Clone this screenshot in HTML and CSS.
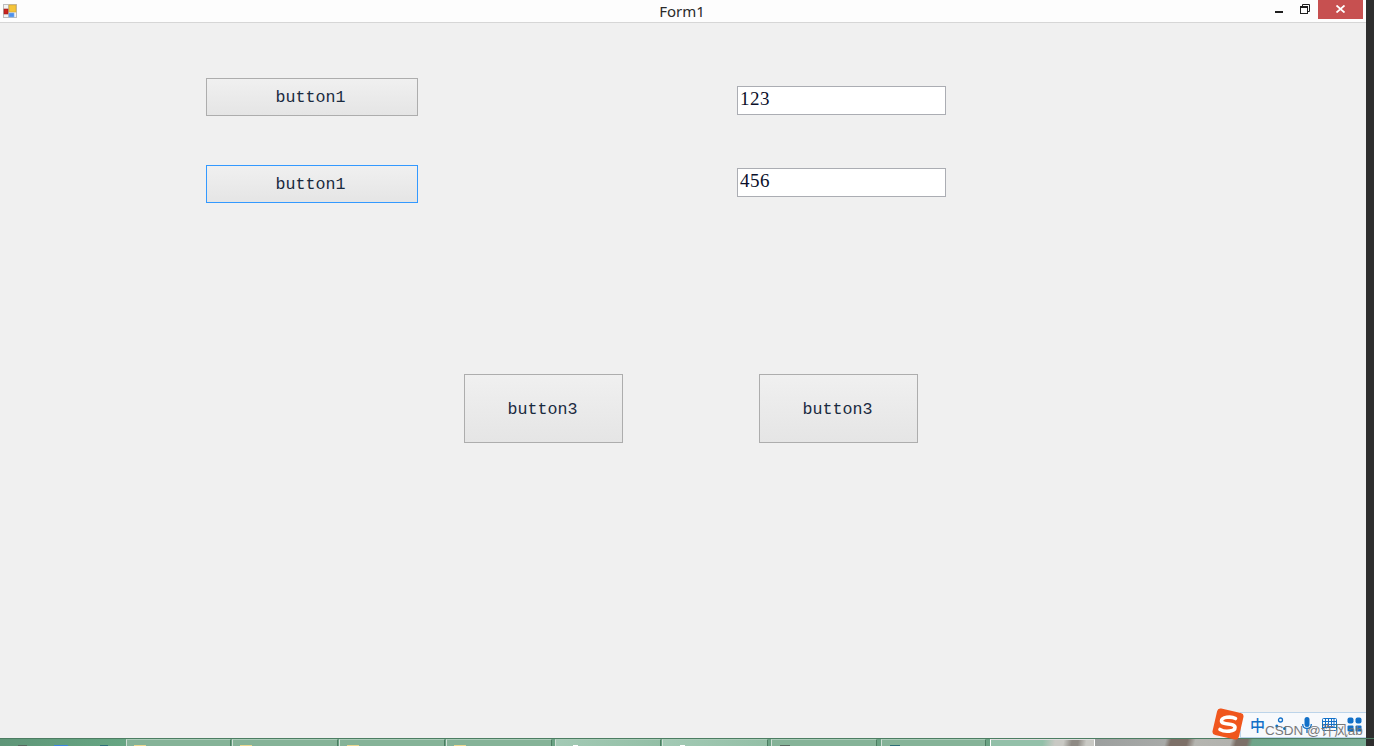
FILE: index.html
```html
<!DOCTYPE html>
<html lang="zh">
<head>
<meta charset="utf-8">
<title>Form1</title>
<link rel="stylesheet" href="styles.css">
</head>
<body>
<div class="screen">
  <div class="main">
    <div class="window">
      <header class="titlebar">
        <svg class="app-icon" width="14" height="14" viewBox="0 0 14 14">
          <rect width="14" height="14" fill="#f2f2f2"/>
          <path d="M0.5 0V14M5.5 0V14M13.5 0V14M0 0.5H14M0 13.5H14" stroke="#bdbdbd" fill="none"/>
          <rect x="6" y="1" width="7" height="7" fill="#f5c53a" stroke="#d8a838" stroke-width="0.7"/>
          <rect x="1" y="5" width="4" height="5" fill="#cc221c" stroke="#96201a" stroke-width="0.6"/>
          <rect x="6" y="9" width="5" height="4" fill="#4f90ea" stroke="#7aaef0" stroke-width="0.6"/>
        </svg>
        <span class="title">Form1</span>
        <div class="controls">
          <span class="ctl"><svg width="9" height="9" viewBox="0 0 9 9"><rect x="0" y="7" width="8" height="2" fill="#1e1e1e"/></svg></span>
          <span class="ctl"><svg width="10" height="10" viewBox="0 0 10 10" fill="none" stroke="#1e1e1e"><path d="M2.5 2V0.5H9.5V7.5H8"/><rect x="0.5" y="2.5" width="7" height="7"/><path d="M1 3.5H7"/></svg></span>
          <span class="ctl close"><svg width="9" height="8" viewBox="0 0 9 8" fill="none" stroke="#fff" stroke-width="1.8"><path d="M0.5 0.5L8.5 7.5M8.5 0.5L0.5 7.5"/></svg></span>
        </div>
      </header>
      <main class="form">
        <div class="top-row">
          <div class="button-col">
            <button class="win-btn wide">button1</button>
            <button class="win-btn wide focused">button1</button>
          </div>
          <div class="input-col">
            <div class="win-input first">123</div>
            <div class="win-input">456</div>
          </div>
        </div>
        <div class="bottom-row">
          <button class="win-btn big">button3</button>
          <button class="win-btn big">button3</button>
        </div>
      </main>
    </div>
    <div class="edge"></div>
  </div>
  <footer class="taskbar">
    <div class="start">
      <i class="tray gray"></i><i class="tray blue"></i><i class="tray teal"></i>
    </div>
    <div class="task w105"><i class="folder"></i></div>
    <div class="task w106"><i class="folder"></i></div>
    <div class="task w106"><i class="folder"></i></div>
    <div class="task w106"><i class="folder"></i></div>
    <div class="task w106 light gap3"><i class="doc"></i></div>
    <div class="task w106 light"><i class="doc"></i></div>
    <div class="task w106 gap3"><i class="mark"></i></div>
    <div class="task w105 gap4"><i class="mark teal-mark"></i></div>
    <div class="task w105 active gap4"></div>
    <div class="wallpaper"></div>
    <div class="edge"></div>
  </footer>
  <div class="ime">
    <svg class="ime-logo" width="32" height="32" viewBox="0 0 32 32">
      <rect x="2.5" y="2.5" width="27" height="27" rx="3.5" fill="#f0561d" transform="rotate(13 16 16)"/>
      <path d="M23.5 10.5C19 8 9.5 9 9.5 13C9.5 17.5 23 14.5 23 19.5C23 23.5 13 24.5 8 21.5" fill="none" stroke="#fff" stroke-width="3.6" stroke-linecap="round"/>
    </svg>
    <div class="ime-bar">
      <span class="ime-zh">中</span>
      <svg class="ime-dots" width="12" height="15" viewBox="0 0 12 15" fill="#1270c8"><circle cx="5.5" cy="3" r="2" fill="none" stroke="#1270c8" stroke-width="1.3"/><circle cx="1.8" cy="9" r="1.5"/><circle cx="9.5" cy="11.5" r="1.5"/></svg>
      <svg class="ime-mic" width="10" height="16" viewBox="0 0 10 16"><rect x="2.5" y="0" width="5" height="10" rx="2.5" fill="#1270c8"/><path d="M0.7 7C0.7 13 9.3 13 9.3 7M5 12V16" fill="none" stroke="#1270c8" stroke-width="1.3"/></svg>
      <svg width="15" height="13" viewBox="0 0 15 13" fill="none" stroke="#1270c8"><rect x="0.5" y="0.5" width="14" height="12" rx="1"/><path d="M0.5 3.5H14.5M0.5 6.5H14.5M0.5 9.5H14.5M3.5 0.5V9.5M6.5 0.5V9.5M9.5 0.5V9.5M12 0.5V9.5"/></svg>
      <svg width="15" height="15" viewBox="0 0 15 15" fill="#1270c8"><rect x="0.5" y="0.5" width="6" height="6" rx="2"/><rect x="8.5" y="0.5" width="6" height="6" rx="2"/><rect x="0.5" y="8.5" width="6" height="6" rx="1"/><rect x="8.5" y="8.5" width="6" height="6" rx="1"/></svg>
    </div>
    <span class="watermark">CSDN @许风ab</span>
  </div>
</div>
</body>
</html>
```
FILE: styles.css
```css
* { box-sizing: border-box; }
html, body { margin: 0; padding: 0; }
body { overflow: hidden; background: #f0f0f0; }

.screen {
  position: relative;
  width: 1374px;
  height: 746px;
  display: flex;
  flex-direction: column;
  overflow: hidden;
}

.main { flex: 1; display: flex; min-height: 0; }
.window { flex: 1; display: flex; flex-direction: column; min-width: 0; }
.edge { width: 8px; flex: none; background: #2e2e2e; }

.titlebar {
  position: relative;
  height: 23px;
  flex: none;
  display: flex;
  align-items: flex-start;
  background: #fdfdfd;
  border-bottom: 1px solid #d6d6d6;
}
.app-icon { margin: 4px 0 0 3px; }
.title {
  position: absolute;
  left: 0;
  right: 0;
  top: 1px;
  padding-right: 2px;
  text-align: center;
  font: 15px/20px "Noto Sans", sans-serif;
  color: #2a2a2a;
}
.controls { position: absolute; right: 3px; top: 0; display: flex; }
.ctl {
  width: 26px;
  height: 19px;
  display: flex;
  align-items: flex-start;
  justify-content: center;
  padding-top: 4px;
}
.ctl.close { width: 45px; background: #c75050; padding-top: 5px; }

.form { flex: 1; background: #f0f0f0; padding-top: 55px; }
.top-row { display: flex; padding-left: 206px; }
.button-col { width: 212px; display: flex; flex-direction: column; gap: 49px; }
.input-col { width: 209px; margin-left: 319px; padding-top: 8px; }

.win-btn {
  display: block;
  border: 1px solid #adadad;
  background: linear-gradient(#f0f0f0, #e5e5e5);
  font: 16.67px/1 "Liberation Mono", monospace;
  color: #1a2a40;
  text-align: center;
}
.wide { width: 212px; height: 38px; padding: 2px 3px 0 0; }
.focused { border-color: #3399ff; }
.big { width: 159px; height: 69px; padding: 3px 2px 0 0; }

.win-input {
  width: 209px;
  height: 29px;
  border: 1px solid #abadb3;
  background: #fff;
  padding: 0 0 0 2px;
  font: 19px/23px "Liberation Serif", serif;
  letter-spacing: 0.5px;
  color: #0a0f2a;
}
.win-input.first { margin-bottom: 53px; }

.bottom-row { display: flex; gap: 136px; padding-left: 464px; margin-top: 171px; }

.taskbar {
  flex: none;
  height: 8px;
  display: flex;
  background: #6aa283;
  border-top: 1px solid #4c7d62;
}
.start {
  position: relative;
  width: 125px;
  background: linear-gradient(90deg, #5f9678, #66a683);
}
.tray { position: absolute; bottom: 0; height: 1px; }
.tray.gray { left: 18px; width: 9px; background: #55695f; }
.tray.blue { left: 54px; width: 14px; background: #3c86e0; }
.tray.teal { left: 100px; width: 8px; background: #2f6f78; }

.task {
  position: relative;
  flex: none;
  border-left: 1px solid #cfe0d6;
  border-right: 1px solid #4c7d62;
  border-top: 1px solid #a9cbb7;
  margin-left: 1px;
  background: #85b398;
}
.w105 { width: 105px; }
.w106 { width: 106px; }
.gap3 { margin-left: 3px; }
.gap4 { margin-left: 4px; }
.task.light { background: linear-gradient(90deg, #a3cab5, #93bfa6); }
.task.active {
  border-left: 1px solid #fff;
  border-right: 1px solid #fff;
  border-top: 1px solid #ddd;
  background: linear-gradient(100deg, #93c0a9 50%, #c9c9c4 62%, #c9c9c4 70%, #8e8a84 78%, #8e8a84 84%, #c9c9c4 92%);
}
.folder, .doc, .mark { position: absolute; bottom: 0; height: 1px; }
.folder { left: 7px; width: 12px; background: #ecd88f; }
.doc { left: 17px; width: 5px; background: #fff; }
.mark { left: 8px; width: 10px; background: #5a6b62; }
.mark.teal-mark { background: #2f6f78; }
.wallpaper {
  flex: 1;
  background: linear-gradient(105deg, #9c9f9e 0, #a8aaa8 26%, #7d7068 28%, #7d7068 34%, #b5b5b0 37%, #b2b2ae 50%, #7d7068 52%, #7d7068 56%, #6fa58a 58%, #78ab92 100%);
}

.ime { position: absolute; left: 1210px; top: 706px; width: 156px; height: 34px; }
.ime-logo { position: absolute; left: 2px; top: 2px; z-index: 1; }
.ime-bar {
  position: absolute;
  left: 30px;
  top: 6px;
  width: 126px;
  height: 26px;
  display: flex;
  align-items: center;
  gap: 10px;
  padding: 0 0 1px 9px;
  background: #f7f9fc;
  border: 1px solid #bcd4ea;
  border-right: 0;
}
.ime-zh { font: 500 15px/1 "Noto Sans CJK SC", sans-serif; color: #1270c8; }
.ime-mic { margin-left: 5px; }
.watermark {
  position: absolute;
  left: 55px;
  top: 16px;
  white-space: nowrap;
  font: 13.5px/17px "Liberation Sans", "Noto Sans CJK SC", sans-serif;
  color: #77787a;
  z-index: 2;
}
```
